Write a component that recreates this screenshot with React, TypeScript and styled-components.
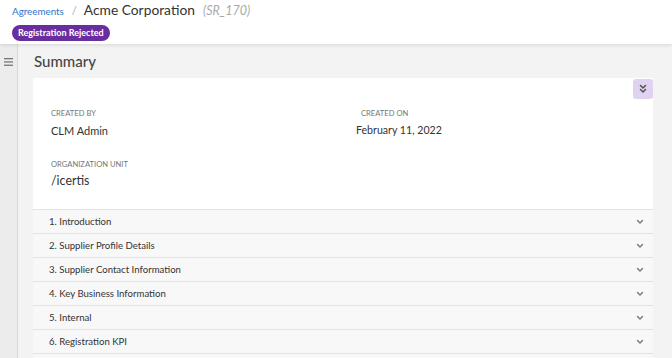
import React from "react";
import styled, { createGlobalStyle } from "styled-components";

const Global = createGlobalStyle`
  html, body { margin: 0; padding: 0; }
  body { font-family: Lato, "Open Sans", sans-serif; background: #f3f3f3; width: 672px; height: 358px; overflow: hidden; }
  * { box-sizing: border-box; }
`;

const Page = styled.div`
  display: flex;
  flex-direction: column;
  width: 672px;
  height: 358px;
  overflow: hidden;
`;

const Header = styled.header`
  background: #fff;
  height: 44px;
  padding: 0 12px 0;
  box-shadow: 0 1px 4px rgba(0, 0, 0, 0.12);
  position: relative;
  z-index: 2;
  flex-shrink: 0;
`;

const Crumbs = styled.div`
  display: flex;
  align-items: baseline;
  height: 20px;
  padding-top: 1px;
`;

const CrumbLink = styled.a`
  color: #2f74c8;
  font-size: 9.8px;
  text-decoration: none;
`;

const Sep = styled.span`
  color: #aaa;
  font-size: 11px;
  margin: 0 7px 0 8px;
`;

const Title = styled.span`
  color: #333;
  font-size: 13.8px;
`;

const Code = styled.span`
  color: #aaa;
  font-size: 12.5px;
  font-style: italic;
  margin-left: 8px;
`;

const Badge = styled.span`
  display: inline-flex;
  align-items: center;
  margin-top: 1px;
  height: 16px;
  padding: 0 6px;
  border-radius: 8px;
  background: #6a2d9f;
  color: #fff;
  font-size: 9px;
  font-weight: 700;
`;

const Body = styled.div`
  display: flex;
  flex: 1;
  min-height: 0;
`;

const Sidebar = styled.aside`
  width: 18px;
  background: #ececec;
  border-right: 1px solid #dadada;
  display: flex;
  justify-content: center;
  padding-top: 14px;
  flex-shrink: 0;
`;

const Main = styled.main`
  flex: 1;
  padding: 8px 19px 0 15px;
  min-width: 0;
`;

const Heading = styled.h1`
  margin: 0 0 7px 1px;
  font-size: 15px;
  font-weight: 500;
  color: #444;
  height: 19px;
  line-height: 19px;
`;

const Card = styled.section`
  background: #fff;
  position: relative;
`;

const ExpandBtn = styled.button`
  position: absolute;
  top: 1px;
  right: 0;
  width: 20px;
  height: 20px;
  border: none;
  border-radius: 3px;
  background: #dfd3f1;
  display: flex;
  align-items: center;
  justify-content: center;
  padding: 0;
`;

const Fields = styled.div`
  display: grid;
  grid-template-columns: 305px 1fr;
  row-gap: 22px;
  padding: 30px 0 21px 18px;
`;

const Field = styled.div`
  display: flex;
  flex-direction: column;
`;

const Label = styled.div<{ $indent?: number }>`
  font-size: 7.6px;
  color: #777;
  text-transform: uppercase;
  height: 11px;
  line-height: 11px;
  margin-left: ${(p) => p.$indent ?? 0}px;
`;

const Value = styled.div<{ $size?: number; $gap?: number }>`
  font-size: ${(p) => p.$size ?? 11}px;
  color: #333;
  margin-top: ${(p) => p.$gap ?? 5}px;
`;

const Row = styled.div`
  height: 24px;
  border-top: 1px solid #e3e3e3;
  background: #f8f8f8;
  display: flex;
  align-items: center;
  justify-content: space-between;
  padding: 0 9px 0 16px;
  font-size: 9.6px;
  color: #333;
`;

const DoubleChevron = () => (
  <svg width="10" height="10" viewBox="0 0 10 10" fill="none" stroke="#555" strokeWidth="1.6" strokeLinecap="round" strokeLinejoin="round">
    <path d="M2.5 1.5 L5 4 L7.5 1.5" />
    <path d="M2.5 5.5 L5 8 L7.5 5.5" />
  </svg>
);

const Chevron = () => (
  <svg width="8" height="6" viewBox="0 0 8 6" fill="none" stroke="#777" strokeWidth="1.4" strokeLinecap="round" strokeLinejoin="round">
    <path d="M1.5 1.5 L4 4 L6.5 1.5" />
  </svg>
);

const Hamburger = () => (
  <svg width="9" height="8" viewBox="0 0 9 8" fill="#777">
    <rect x="0" y="0" width="9" height="1.3" />
    <rect x="0" y="3.3" width="9" height="1.3" />
    <rect x="0" y="6.6" width="9" height="1.3" />
  </svg>
);

const sections = [
  "1. Introduction",
  "2. Supplier Profile Details",
  "3. Supplier Contact Information",
  "4. Key Business Information",
  "5. Internal",
  "6. Registration KPI",
];

export default function App() {
  return (
    <>
      <Global />
      <Page>
        <Header>
          <Crumbs>
            <CrumbLink href="#">Agreements</CrumbLink>
            <Sep>/</Sep>
            <Title>Acme Corporation</Title>
            <Code>(SR_170)</Code>
          </Crumbs>
          <Badge>Registration Rejected</Badge>
        </Header>
        <Body>
          <Sidebar>
            <Hamburger />
          </Sidebar>
          <Main>
            <Heading>Summary</Heading>
            <Card>
              <ExpandBtn aria-label="Expand all">
                <DoubleChevron />
              </ExpandBtn>
              <Fields>
                <Field>
                  <Label>Created By</Label>
                  <Value>CLM Admin</Value>
                </Field>
                <Field>
                  <Label $indent={5}>Created On</Label>
                  <Value $size={10.6}>February 11, 2022</Value>
                </Field>
                <Field>
                  <Label>Organization Unit</Label>
                  <Value $size={12.4} $gap={3}>/icertis</Value>
                </Field>
              </Fields>
              {sections.map((s) => (
                <Row key={s}>
                  <span>{s}</span>
                  <Chevron />
                </Row>
              ))}
              <Row />
            </Card>
          </Main>
        </Body>
      </Page>
    </>
  );
}
